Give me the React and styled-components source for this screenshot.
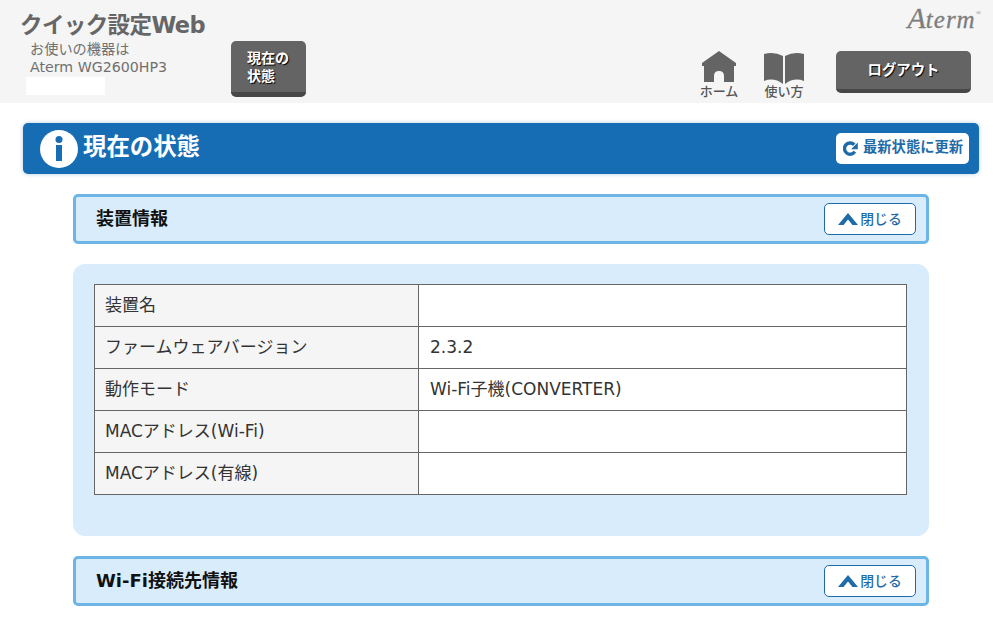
import React from 'react';
import styled, { createGlobalStyle } from 'styled-components';

const GlobalStyle = createGlobalStyle`
  html, body {
    margin: 0;
    padding: 0;
    background: #fff;
    height: 622px;
    overflow: hidden;
    font-family: "DejaVu Sans", "Noto Sans CJK JP", sans-serif;
    color: #333;
  }
`;

const Header = styled.header`
  display: flex;
  height: 103px;
  background: #f5f5f5;
  box-sizing: border-box;
`;

const Brand = styled.div`
  width: 231px;
  padding: 10px 0 0 20px;
  box-sizing: border-box;
`;

const BrandTitle = styled.div`
  font-family: "DejaVu Sans", "Noto Sans CJK JP", sans-serif;
  font-size: 22.5px;
  font-weight: 700;
  line-height: 30px;
  letter-spacing: -0.6px;
  color: #666;
`;

const DeviceText = styled.div`
  margin: 0 0 0 10px;
  font-size: 14.2px;
  line-height: 18px;
  color: #707070;
  white-space: nowrap;
`;

const SerialMask = styled.div`
  width: 79px;
  height: 18px;
  margin: 1px 0 0 6px;
  background: #fff;
`;

const StatusButton = styled.button`
  width: 75px;
  height: 56px;
  margin-top: 41px;
  padding: 0 0 1px 16px;
  border: 0;
  border-bottom: 5px solid #474747;
  border-radius: 5px;
  background: #646464;
  color: #fff;
  font-family: "Noto Sans CJK JP", sans-serif;
  font-size: 14px;
  font-weight: 700;
  line-height: 18px;
  text-align: left;
  text-shadow: 1px 1px 1px #000;
  box-sizing: border-box;
`;

const HeaderRight = styled.div`
  flex: 1;
  display: flex;
  flex-direction: column;
  align-items: flex-end;
  padding: 6px 22px 0 0;
`;

const Logo = styled.div`
  display: flex;
  align-items: baseline;
  height: 21px;
  margin-right: -10px;
  font-family: "Liberation Serif", serif;
  font-style: italic;
  font-size: 25px;
  line-height: 24px;
  color: #7d7d7d;
  -webkit-text-stroke: 0.3px #7d7d7d;
  b {
    font-size: 30px;
    font-weight: 400;
  }
  span {
    letter-spacing: 1px;
  }
  sup {
    font-size: 7px;
    align-self: center;
    line-height: 0;
    margin-top: -8px;
    -webkit-text-stroke: 0;
  }
`;

const NavRow = styled.div`
  display: flex;
  align-items: flex-start;
  margin-top: 24px;
`;

const NavItem = styled.div`
  display: flex;
  flex-direction: column;
  align-items: center;
  width: ${(props) => props.width}px;
  margin-right: ${(props) => props.gap}px;
`;

const NavLabel = styled.span`
  font-family: "Noto Sans CJK JP", sans-serif;
  font-size: 13px;
  font-weight: 500;
  line-height: 13px;
  color: #555;
`;

const LogoutButton = styled.button`
  width: 135px;
  height: 42px;
  padding: 0 0 3px;
  border: 0;
  border-bottom: 4px solid #474747;
  border-radius: 5px;
  background: #646464;
  color: #fff;
  font-family: "Noto Sans CJK JP", sans-serif;
  font-size: 14.4px;
  font-weight: 700;
  text-shadow: 1px 1px 1px #000;
  box-sizing: border-box;
`;

const Main = styled.main`
  padding: 20px 14px 0 23px;
`;

const PageBar = styled.div`
  display: flex;
  align-items: center;
  justify-content: space-between;
  height: 51px;
  padding: 0 10px 0 17px;
  border-radius: 5px;
  background: #176db3;
  box-shadow: 0 0 4px rgba(23, 109, 179, 0.35);
`;

const PageTitle = styled.h1`
  display: flex;
  align-items: center;
  gap: 5px;
  margin: 0;
  color: #fff;
  span {
    padding-bottom: 7px;
    font-family: "Noto Sans CJK JP", sans-serif;
    font-size: 23.4px;
    font-weight: 700;
  }
`;

const RefreshButton = styled.button`
  display: flex;
  align-items: center;
  gap: 5px;
  width: 133px;
  height: 31px;
  padding: 0 0 0 7px;
  border: 0;
  border-radius: 5px;
  background: #fff;
  color: #1f6ba8;
  font-family: "Noto Sans CJK JP", sans-serif;
  font-size: 14.3px;
  font-weight: 700;
  white-space: nowrap;
  span {
    padding-bottom: 6px;
  }
`;

const Content = styled.div`
  padding: 20px 50px 0;
`;

const SectionBar = styled.div`
  display: flex;
  align-items: center;
  justify-content: space-between;
  height: 50px;
  padding: 0 10px 0 20px;
  border: 3px solid #6db5e5;
  border-radius: 5px;
  background: #d9ecfc;
  box-sizing: border-box;
`;

const SectionTitle = styled.h2`
  margin: 0;
  padding-bottom: 5px;
  font-family: "DejaVu Sans", "Noto Sans CJK JP", sans-serif;
  font-size: 18px;
  font-weight: 700;
  color: #111;
`;

const CloseButton = styled.button`
  display: flex;
  align-items: center;
  justify-content: center;
  gap: 2px;
  width: 92px;
  height: 32px;
  padding: 0;
  border: 1px solid #1f6ba8;
  border-radius: 5px;
  background: #fff;
  color: #1f6ba8;
  font-family: "Noto Sans CJK JP", sans-serif;
  font-size: 13.8px;
  font-weight: 500;
  span {
    padding-bottom: 2px;
  }
`;

const Panel = styled.div`
  margin: 20px 0;
  height: 272px;
  padding: 20px 22px 0 21px;
  border-radius: 12px;
  background: #d9ecfc;
  box-sizing: border-box;
`;

const InfoTable = styled.table`
  width: 100%;
  border-collapse: collapse;
  table-layout: fixed;
  font-size: 17px;
  line-height: 24px;
  color: #333;
`;

const LabelCell = styled.th`
  width: 324px;
  height: 42px;
  padding: 0 0 2px 10px;
  border: 1px solid #666;
  background: #f5f5f5;
  font-weight: 400;
  text-align: left;
  box-sizing: border-box;
`;

const ValueCell = styled.td`
  height: 42px;
  padding: 0 0 2px 11px;
  border: 1px solid #666;
  background: #fff;
  box-sizing: border-box;
`;

const HomeIcon = () => (
  <svg width="36" height="33" viewBox="0 0 36 33">
    <path fill="#646464" d="M18 0 35 12 35 15 33 15 33 31 23 31 23 25Q23 20 18 20T13 25L13 31 3 31 3 15 1 15 1 12Z" />
  </svg>
);

const BookIcon = () => (
  <svg width="40" height="33" viewBox="0 0 40 33">
    <path fill="#646464" d="M0 3Q10 0 19 5L19 33Q10 26 0 30ZM21 5Q30 0 40 3L40 30Q30 26 21 33Z" />
  </svg>
);

const InfoIcon = () => (
  <svg width="38" height="38" viewBox="0 0 38 38">
    <circle cx="19" cy="19" r="19" fill="#fff" />
    <circle cx="19" cy="9.5" r="3.5" fill="#176db3" />
    <rect x="16" y="15" width="6" height="16" fill="#176db3" />
  </svg>
);

const RefreshIcon = () => (
  <svg width="15" height="15" viewBox="0 0 16 16">
    <path fill="none" stroke="#1f6ba8" strokeWidth="3.6" d="M12.6 11.4A6 6 0 1 1 12 4" />
    <path fill="#1f6ba8" d="M15.8 1.5 15.8 8.8 8.6 8.8Z" />
  </svg>
);

const ChevronIcon = () => (
  <svg width="20" height="12" viewBox="0 0 20 12">
    <path fill="#1f6ba8" d="M0 12 10 0 20 12 14.5 12 10 6.5 5.5 12Z" />
  </svg>
);

const rows = [
  ['装置名', ''],
  ['ファームウェアバージョン', '2.3.2'],
  ['動作モード', 'Wi-Fi子機(CONVERTER)'],
  ['MACアドレス(Wi-Fi)', ''],
  ['MACアドレス(有線)', ''],
];

const CloseToggle = () => (
  <CloseButton><ChevronIcon /><span>閉じる</span></CloseButton>
);

const App = () => {
  return (
    <>
      <GlobalStyle />
      <Header>
        <Brand>
          <BrandTitle>クイック設定Web</BrandTitle>
          <DeviceText>お使いの機器は</DeviceText>
          <DeviceText>Aterm WG2600HP3</DeviceText>
          <SerialMask />
        </Brand>
        <StatusButton>現在の<br />状態</StatusButton>
        <HeaderRight>
          <Logo><b>A</b><span>term</span><sup>®</sup></Logo>
          <NavRow>
            <NavItem width={40} gap={25}>
              <HomeIcon />
              <NavLabel>ホーム</NavLabel>
            </NavItem>
            <NavItem width={40} gap={32}>
              <BookIcon />
              <NavLabel>使い方</NavLabel>
            </NavItem>
            <LogoutButton>ログアウト</LogoutButton>
          </NavRow>
        </HeaderRight>
      </Header>
      <Main>
        <PageBar>
          <PageTitle><InfoIcon /><span>現在の状態</span></PageTitle>
          <RefreshButton><RefreshIcon /><span>最新状態に更新</span></RefreshButton>
        </PageBar>
        <Content>
          <SectionBar>
            <SectionTitle>装置情報</SectionTitle>
            <CloseToggle />
          </SectionBar>
          <Panel>
            <InfoTable>
              <tbody>
                {rows.map(([label, value]) => (
                  <tr key={label}>
                    <LabelCell>{label}</LabelCell>
                    <ValueCell>{value}</ValueCell>
                  </tr>
                ))}
              </tbody>
            </InfoTable>
          </Panel>
          <SectionBar>
            <SectionTitle>Wi-Fi接続先情報</SectionTitle>
            <CloseToggle />
          </SectionBar>
        </Content>
      </Main>
    </>
  );
};

export default App;
